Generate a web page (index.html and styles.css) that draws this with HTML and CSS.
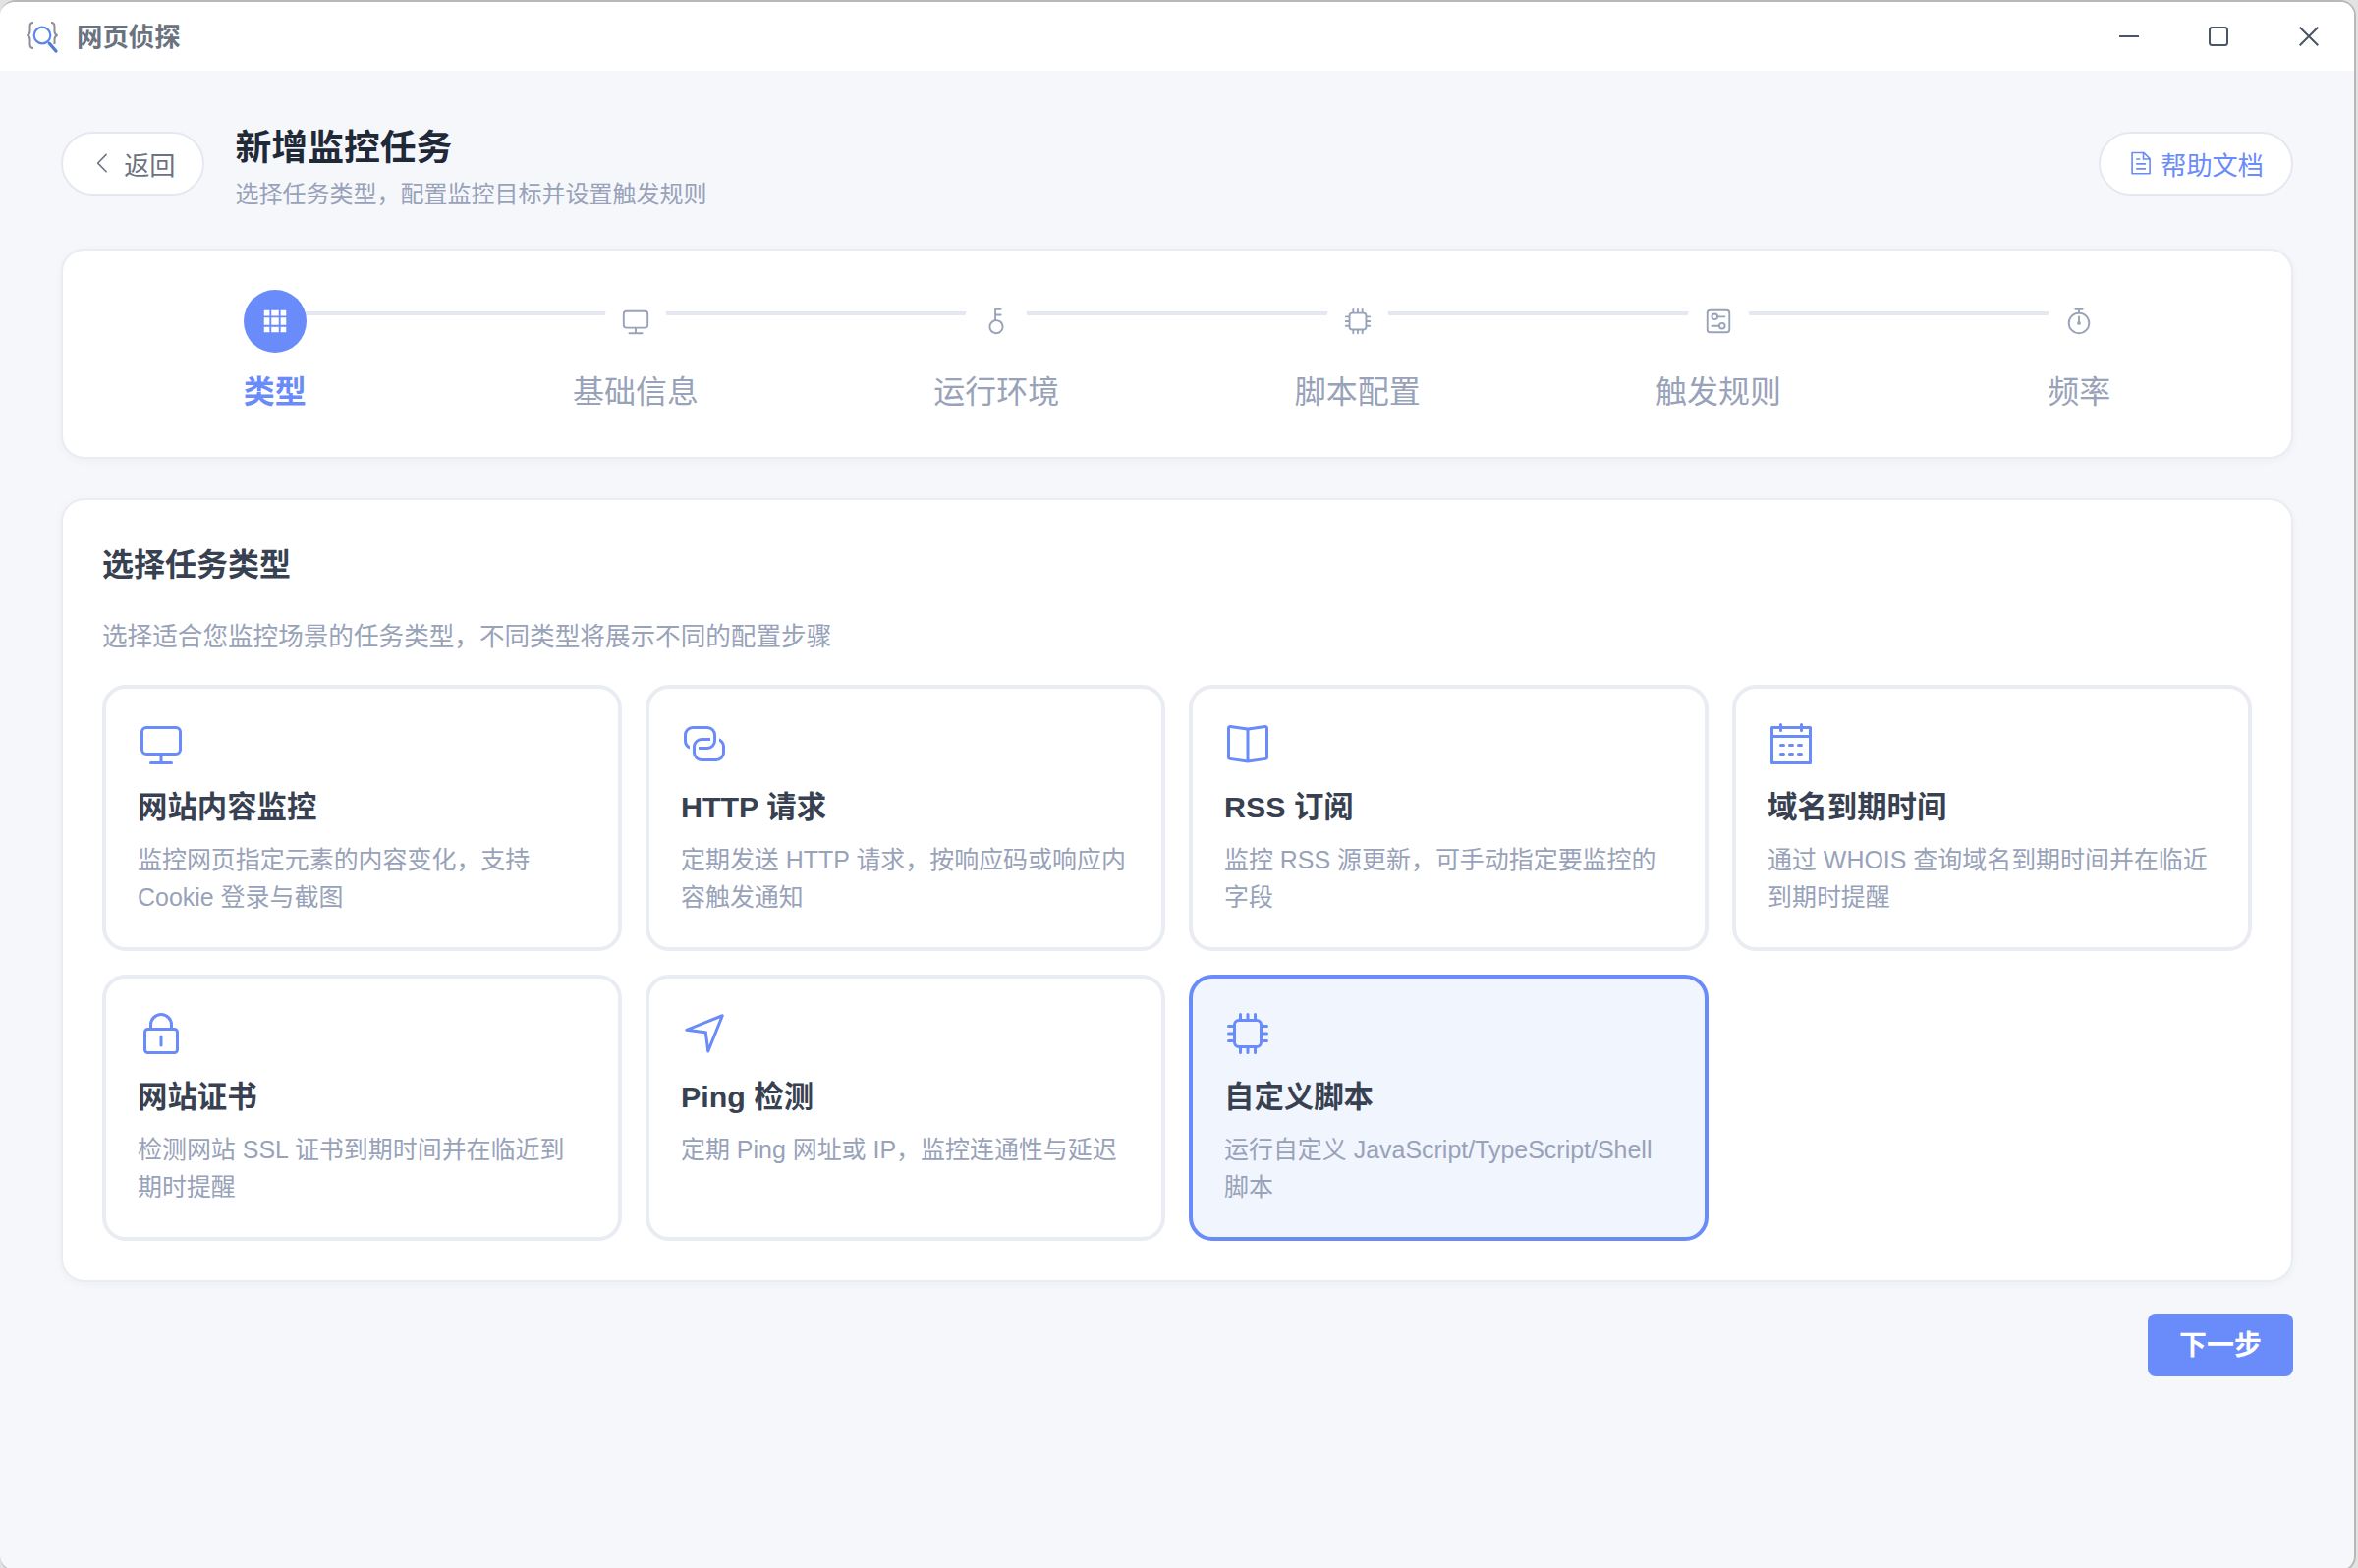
FILE: index.html
```html
<!DOCTYPE html>
<html lang="zh-CN">
<head>
    <meta charset="UTF-8">
    <meta name="viewport" content="width=device-width, initial-scale=1.0">
    <title>网页侦探</title>
    <link rel="stylesheet" href="styles.css">
</head>
<body>
    <!-- Shared icons -->
    <svg class="icon-defs" xmlns="http://www.w3.org/2000/svg">
        <symbol id="icon-monitor" viewBox="0 0 1024 1024">
            <path d="M544 768v128h192a32 32 0 1 1 0 64H288a32 32 0 1 1 0-64h192V768H192A128 128 0 0 1 64 640V256a128 128 0 0 1 128-128h640a128 128 0 0 1 128 128v384a128 128 0 0 1-128 128zM192 192a64 64 0 0 0-64 64v384a64 64 0 0 0 64 64h640a64 64 0 0 0 64-64V256a64 64 0 0 0-64-64z"/>
        </symbol>
        <symbol id="icon-cpu" viewBox="0 0 1024 1024">
            <path d="M320 256a64 64 0 0 0-64 64v384a64 64 0 0 0 64 64h384a64 64 0 0 0 64-64V320a64 64 0 0 0-64-64zm0-64h384a128 128 0 0 1 128 128v384a128 128 0 0 1-128 128H320a128 128 0 0 1-128-128V320a128 128 0 0 1 128-128"/>
            <path d="M512 64a32 32 0 0 1 32 32v128h-64V96a32 32 0 0 1 32-32m160 0a32 32 0 0 1 32 32v128h-64V96a32 32 0 0 1 32-32m-320 0a32 32 0 0 1 32 32v128h-64V96a32 32 0 0 1 32-32m160 896a32 32 0 0 1-32-32V800h64v128a32 32 0 0 1-32 32m160 0a32 32 0 0 1-32-32V800h64v128a32 32 0 0 1-32 32m-320 0a32 32 0 0 1-32-32V800h64v128a32 32 0 0 1-32 32M64 512a32 32 0 0 1 32-32h128v64H96a32 32 0 0 1-32-32m0-160a32 32 0 0 1 32-32h128v64H96a32 32 0 0 1-32-32m0 320a32 32 0 0 1 32-32h128v64H96a32 32 0 0 1-32-32m896-160a32 32 0 0 1-32 32H800v-64h128a32 32 0 0 1 32 32m0-160a32 32 0 0 1-32 32H800v-64h128a32 32 0 0 1 32 32m0 320a32 32 0 0 1-32 32H800v-64h128a32 32 0 0 1 32 32"/>
        </symbol>
    </svg>

    <div class="window">
        <div class="titlebar">
            <div class="brand">
                <svg class="logo" viewBox="0 0 36 36" fill="none">
                    <path d="M9 4c-3 0-3.500 1.500-3.500 4v5c0 2.500-1 3.500-3 4 2 .5 3 1.500 3 4v5c0 2.500.5 4 3.500 4" stroke="#8b8d98" stroke-width="2"/>
                    <path d="M27 4c3 0 3.500 1.500 3.500 4v5c0 2.500 1 3.500 3 4-2 .5-3 1.500-3 4v5" stroke="#8b8d98" stroke-width="2"/>
                    <circle cx="18" cy="17" r="8.300" stroke="#5b8ae6" stroke-width="2.200"/>
                    <path d="M24 24l1.500 1.500" stroke="#5b8ae6" stroke-width="2.200"/>
                    <path d="M25.500 25.500l6.500 7.500" stroke="#4e7dd6" stroke-width="3.400" stroke-linecap="round"/>
                </svg>
                <span class="brand-name">网页侦探</span>
            </div>
            <div class="window-controls">
                <svg viewBox="0 0 20 20"><path d="M0 10h20"/></svg>
                <svg viewBox="0 0 20 20"><rect x="1" y="1" width="18" height="18" rx="2.500"/></svg>
                <svg viewBox="0 0 20 20"><path d="M.7.7l18.600 18.600M19.300.7L.7 19.300"/></svg>
            </div>
        </div>

        <div class="page">
            <div class="page-header">
                <button class="pill-btn back-btn">
                    <svg class="icon" viewBox="0 0 1024 1024"><path d="M609.408 149.376 277.760 489.600a32 32 0 0 0 0 44.672l331.648 340.352a29.120 29.120 0 0 0 41.728 0 30.592 30.592 0 0 0 0-42.752L339.264 511.936l311.872-319.872a30.592 30.592 0 0 0 0-42.688 29.120 29.120 0 0 0-41.728 0"/></svg>
                    <span>返回</span>
                </button>
                <div class="page-heading">
                    <h1>新增监控任务</h1>
                    <p>选择任务类型，配置监控目标并设置触发规则</p>
                </div>
                <button class="pill-btn help-btn">
                    <svg class="icon" viewBox="0 0 1024 1024"><path d="M832 384H576V128H192v768h640zm-26.496-64L640 154.496V320zM160 64h480l256 256v608a32 32 0 0 1-32 32H160a32 32 0 0 1-32-32V96a32 32 0 0 1 32-32m160 448h384v64H320zm0-192h160v64H320zm0 384h384v64H320z"/></svg>
                    <span>帮助文档</span>
                </button>
            </div>

            <div class="card steps">
                <div class="step active">
                    <div class="step-icon">
                        <svg class="icon" viewBox="0 0 1024 1024"><path d="M640 384v256H384V384zm64 0h192v256H704zm-64 512H384V704h256zm64 0V704h192v192zm-64-768v192H384V128zm64 0h192v192H704zM320 384v256H128V384zm0 512H128V704h192zm0-768v192H128V128z"/></svg>
                    </div>
                    <div class="step-title">类型</div>
                </div>
                <div class="step">
                    <div class="step-icon"><svg class="icon"><use href="#icon-monitor"/></svg></div>
                    <div class="step-title">基础信息</div>
                </div>
                <div class="step">
                    <div class="step-icon">
                        <svg class="icon" viewBox="0 0 1024 1024"><path d="M448 456.064V96a32 32 0 0 1 32-32.064L672 64a32 32 0 0 1 0 64H512v128h160a32 32 0 0 1 0 64H512v128a256 256 0 1 1-64 8.064M512 896a192 192 0 1 0 0-384 192 192 0 0 0 0 384"/></svg>
                    </div>
                    <div class="step-title">运行环境</div>
                </div>
                <div class="step">
                    <div class="step-icon"><svg class="icon"><use href="#icon-cpu"/></svg></div>
                    <div class="step-title">脚本配置</div>
                </div>
                <div class="step">
                    <div class="step-icon">
                        <svg class="icon" viewBox="0 0 1024 1024">
                            <path d="M224 160a64 64 0 0 0-64 64v576a64 64 0 0 0 64 64h576a64 64 0 0 0 64-64V224a64 64 0 0 0-64-64zm0-64h576a128 128 0 0 1 128 128v576a128 128 0 0 1-128 128H224A128 128 0 0 1 96 800V224A128 128 0 0 1 224 96"/>
                            <path d="M384 416a64 64 0 1 0 0-128 64 64 0 0 0 0 128m0 64a128 128 0 1 1 0-256 128 128 0 0 1 0 256"/>
                            <path d="M480 320h256a32 32 0 1 1 0 64H480a32 32 0 0 1 0-64m160 416a64 64 0 1 0 0-128 64 64 0 0 0 0 128m0 64a128 128 0 1 1 0-256 128 128 0 0 1 0 256"/>
                            <path d="M288 640h256a32 32 0 1 1 0 64H288a32 32 0 1 1 0-64"/>
                        </svg>
                    </div>
                    <div class="step-title">触发规则</div>
                </div>
                <div class="step">
                    <div class="step-icon">
                        <svg class="icon" viewBox="0 0 1024 1024">
                            <path d="M512 896a320 320 0 1 0 0-640 320 320 0 0 0 0 640m0 64a384 384 0 1 1 0-768 384 384 0 0 1 0 768"/>
                            <path d="M512 320a32 32 0 0 1 32 32l-.512 224a32 32 0 1 1-64 0L480 352a32 32 0 0 1 32-32"/>
                            <path d="M448 576a64 64 0 1 0 128 0 64 64 0 1 0-128 0m96-448v128h-64V128h-96a32 32 0 0 1 0-64h256a32 32 0 1 1 0 64z"/>
                        </svg>
                    </div>
                    <div class="step-title">频率</div>
                </div>
            </div>

            <div class="card type-panel">
                <h2>选择任务类型</h2>
                <p class="panel-hint">选择适合您监控场景的任务类型，不同类型将展示不同的配置步骤</p>
                <div class="type-grid">
                    <div class="type-card">
                        <svg class="icon"><use href="#icon-monitor"/></svg>
                        <h3>网站内容监控</h3>
                        <p>监控网页指定元素的内容变化，支持 Cookie 登录与截图</p>
                    </div>
                    <div class="type-card">
                        <svg class="icon" viewBox="0 0 1024 1024">
                            <path d="M640 384v64H448a128 128 0 0 0-128 128v128a128 128 0 0 0 128 128h320a128 128 0 0 0 128-128V576a128 128 0 0 0-64-110.848V394.880c74.560 26.368 128 97.472 128 181.056v128a192 192 0 0 1-192 192H448a192 192 0 0 1-192-192V576a192 192 0 0 1 192-192z"/>
                            <path d="M384 640v-64h192a128 128 0 0 0 128-128V320a128 128 0 0 0-128-128H256a128 128 0 0 0-128 128v128a128 128 0 0 0 64 110.848v70.272A192.064 192.064 0 0 1 64 448V320a192 192 0 0 1 192-192h320a192 192 0 0 1 192 192v128a192 192 0 0 1-192 192z"/>
                        </svg>
                        <h3>HTTP 请求</h3>
                        <p>定期发送 HTTP 请求，按响应码或响应内容触发通知</p>
                    </div>
                    <div class="type-card">
                        <svg class="icon" viewBox="0 0 1024 1024">
                            <path d="m512 863.360 384-54.848v-638.720L525.568 222.720a96 96 0 0 1-27.136 0L128 169.792v638.720zM137.024 106.432l370.432 52.928a32 32 0 0 0 9.088 0l370.432-52.928A64 64 0 0 1 960 169.792v638.720a64 64 0 0 1-54.976 63.360l-388.480 55.488a32 32 0 0 1-9.088 0l-388.480-55.488A64 64 0 0 1 64 808.512v-638.720a64 64 0 0 1 73.024-63.360"/>
                            <path d="M480 192h64v704h-64z"/>
                        </svg>
                        <h3>RSS 订阅</h3>
                        <p>监控 RSS 源更新，可手动指定要监控的字段</p>
                    </div>
                    <div class="type-card">
                        <svg class="icon" viewBox="0 0 1024 1024"><path d="M128 384v512h768V192H768v32a32 32 0 1 1-64 0v-32H320v32a32 32 0 0 1-64 0v-32H128v128h768v64zm192-256h384V96a32 32 0 1 1 64 0v32h160a32 32 0 0 1 32 32v768a32 32 0 0 1-32 32H96a32 32 0 0 1-32-32V160a32 32 0 0 1 32-32h160V96a32 32 0 0 1 64 0zm-32 384h64a32 32 0 0 1 0 64h-64a32 32 0 0 1 0-64m0 192h64a32 32 0 1 1 0 64h-64a32 32 0 1 1 0-64m192-192h64a32 32 0 0 1 0 64h-64a32 32 0 0 1 0-64m0 192h64a32 32 0 1 1 0 64h-64a32 32 0 1 1 0-64m192-192h64a32 32 0 1 1 0 64h-64a32 32 0 1 1 0-64m0 192h64a32 32 0 1 1 0 64h-64a32 32 0 1 1 0-64"/></svg>
                        <h3>域名到期时间</h3>
                        <p>通过 WHOIS 查询域名到期时间并在临近到期时提醒</p>
                    </div>
                    <div class="type-card">
                        <svg class="icon" viewBox="0 0 1024 1024">
                            <path d="M224 448a32 32 0 0 0-32 32v384a32 32 0 0 0 32 32h576a32 32 0 0 0 32-32V480a32 32 0 0 0-32-32zm0-64h576a96 96 0 0 1 96 96v384a96 96 0 0 1-96 96H224a96 96 0 0 1-96-96V480a96 96 0 0 1 96-96"/>
                            <path d="M512 544a32 32 0 0 1 32 32v192a32 32 0 1 1-64 0V576a32 32 0 0 1 32-32m192-160v-64a192 192 0 1 0-384 0v64zM512 64a256 256 0 0 1 256 256v128H256V320A256 256 0 0 1 512 64"/>
                        </svg>
                        <h3>网站证书</h3>
                        <p>检测网站 SSL 证书到期时间并在临近到期时提醒</p>
                    </div>
                    <div class="type-card">
                        <svg class="icon" viewBox="0 0 1024 1024"><path d="m249.600 417.088 319.744 43.072 39.168 310.272L845.120 178.880 249.600 417.088zm-129.024 47.168a32 32 0 0 1-7.680-61.440l777.792-311.040a32 32 0 0 1 41.600 41.600l-310.336 775.680a32 32 0 0 1-61.440-7.808L512 516.992l-391.424-52.736z"/></svg>
                        <h3>Ping 检测</h3>
                        <p>定期 Ping 网址或 IP，监控连通性与延迟</p>
                    </div>
                    <div class="type-card selected">
                        <svg class="icon"><use href="#icon-cpu"/></svg>
                        <h3>自定义脚本</h3>
                        <p>运行自定义 JavaScript/TypeScript/Shell 脚本</p>
                    </div>
                </div>
            </div>

            <div class="footer-actions">
                <button class="next-btn">下一步</button>
            </div>
        </div>
    </div>
</body>
</html>
```
FILE: styles.css
```css
* {
    box-sizing: border-box;
    margin: 0;
    padding: 0;
}

body {
    font-family: "Liberation Sans", "Noto Sans CJK SC", sans-serif;
    height: 1596px;
    background: #e2e2e2;
    color: #374151;
    overflow: hidden;
}

button {
    font-family: inherit;
    cursor: pointer;
}

.icon-defs {
    display: none;
}

.icon {
    display: block;
    flex-shrink: 0;
    fill: currentColor;
}

.window {
    width: 2398px;
    height: 1600px;
    background: #f5f7fb;
    border: 2px solid #b9b9b9;
    border-left: none;
    border-radius: 16px;
    overflow: hidden;
}

/* Title bar */
.titlebar {
    display: flex;
    align-items: center;
    justify-content: space-between;
    height: 70px;
    padding: 0 36px 0 25px;
    background: #fff;
}

.brand {
    display: flex;
    align-items: center;
    gap: 17px;
}

.logo {
    width: 36px;
    height: 36px;
}

.brand-name {
    padding-bottom: 3px;
    font-size: 26.4px;
    font-weight: 600;
    color: #6b7280;
}

.window-controls {
    display: flex;
    gap: 72px;
}

.window-controls svg {
    width: 20px;
    height: 20px;
    fill: none;
    stroke: #4a5568;
    stroke-width: 2;
}

.window-controls svg:first-child {
    margin-right: -1px;
}

/* Page header */
.page {
    padding: 48px 62px 0;
}

.page-header {
    display: flex;
    align-items: center;
    height: 92px;
    margin-bottom: 41px;
}

.pill-btn {
    display: flex;
    align-items: center;
    gap: 7px;
    height: 65px;
    padding: 0 28px;
    background: #fff;
    border: 2px solid #e5e8f0;
    border-radius: 33px;
    font-size: 26.2px;
}

.pill-btn .icon {
    width: 26.2px;
    height: 26.2px;
}

.pill-btn span {
    padding-top: 2px;
}

.back-btn {
    gap: 8px;
    padding-right: 27px;
    color: #6b7280;
}

.help-btn {
    margin-left: auto;
    color: #6a8bfa;
}

.page-heading {
    align-self: flex-start;
    margin-left: 32px;
    padding-top: 5px;
}

.page-heading h1 {
    font-size: 36.8px;
    line-height: 52px;
    font-weight: 700;
    color: #1f2937;
}

.page-heading p {
    margin-top: 3px;
    font-size: 24px;
    line-height: 36px;
    color: #98a2b9;
}

.card {
    background: #fff;
    border: 2px solid #e9ecf1;
    border-radius: 24px;
    box-shadow: 0 2px 8px rgba(30, 41, 59, 0.04);
}

/* Steps */
.steps {
    display: flex;
    height: 214px;
    margin-bottom: 40px;
    padding: 40px 32px 0;
}

.step {
    position: relative;
    flex: 1;
    display: flex;
    flex-direction: column;
    align-items: center;
    color: #98a2b9;
}

/* connector running behind the step icons */
.step:not(:last-child)::before {
    content: "";
    position: absolute;
    top: 22px;
    left: 50%;
    width: 100%;
    height: 4px;
    background: #e3e8f2;
}

.step-icon {
    display: flex;
    align-items: center;
    justify-content: center;
    width: 64px;
    height: 64px;
    border-radius: 50%;
    background: #fff;
    z-index: 1;
}

.step-icon .icon {
    width: 30px;
    height: 30px;
}

.step-title {
    margin-top: 16px;
    font-size: 32px;
    line-height: 48px;
}

.step.active {
    color: #6a8bfa;
}

.step.active .step-icon {
    background: #6a8bfa;
    color: #fff;
}

.step.active .step-title {
    font-weight: 700;
}

/* Task types */
.type-panel {
    height: 798px;
    padding: 42px 40px 40px;
}

.type-panel h2 {
    font-size: 32px;
    line-height: 48px;
    font-weight: 700;
    color: #374151;
}

.panel-hint {
    margin: 29px 0;
    font-size: 25.6px;
    line-height: 40px;
    color: #98a2b9;
}

.type-grid {
    display: grid;
    grid-template-columns: repeat(4, 1fr);
    gap: 24px;
}

.type-card {
    height: 271px;
    padding: 32px;
    border: 4px solid #e9ecf2;
    border-radius: 24px;
    background: #fff;
}

.type-card .icon {
    width: 48px;
    height: 48px;
    color: #6a8bfa;
}

.type-card h3 {
    margin: 18px 0 13px;
    font-size: 30.4px;
    line-height: 44px;
    font-weight: 700;
    color: #374151;
}

.type-card p {
    font-size: 24.96px;
    line-height: 38px;
    color: #98a2b9;
}

.type-card.selected {
    border-color: #6a8bfa;
    background: #f1f5fe;
}

/* Footer */
.footer-actions {
    display: flex;
    justify-content: flex-end;
    margin-top: 32px;
}

.next-btn {
    height: 64px;
    padding: 0 32px 5px;
    border: none;
    border-radius: 8px;
    background: #6a8bfa;
    color: #fff;
    font-size: 28px;
    font-weight: 600;
}
```
